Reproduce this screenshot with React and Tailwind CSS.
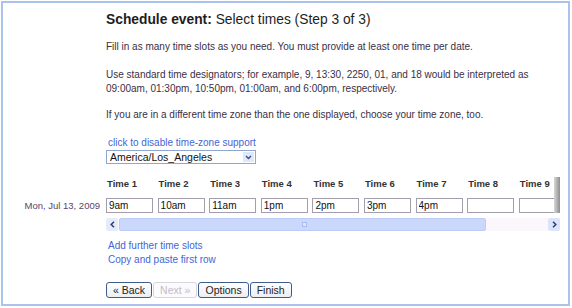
const times = ['9am', '10am', '11am', '1pm', '2pm', '3pm', '4pm', '', ''];

function NavButton({ children, disabled }) {
  return (
    <button
      disabled={disabled}
      className={
        'h-[16px] rounded-[3px] border px-[6px] text-[10.5px] leading-[13px] ' +
        (disabled
          ? 'border-[#d8d4dc] bg-[#fbfafc] px-[5px] text-[#c4bcc8]'
          : 'border-[#3f5c8c] bg-gradient-to-b from-white to-[#eceef4] text-[#222]')
      }
    >
      {children}
    </button>
  );
}

export default function App() {
  return (
    <div className="h-[308px] w-[572px] bg-white font-['Liberation_Sans',Arial,sans-serif] text-[10px] text-[#3a2f45]">
      <div className="ml-[1px] mt-[1px] h-[305px] w-[569px] border-2 border-[#abc3ea] bg-white pt-[8px]">
        <div className="pl-[103px]">
          {/* Heading */}
          <h1 className="text-[13.8px] leading-[18px] text-[#1e1e1e]">
            <span className="font-bold">Schedule event:</span> Select times (Step 3 of 3)
          </h1>

          <p className="mt-[11px] leading-[14px]">
            Fill in as many time slots as you need. You must provide at least one time per date.
          </p>
          <p className="mt-[14px] leading-[14px]">
            Use standard time designators; for example, 9, 13:30, 2250, 01, and 18 would be interpreted as
            <br />
            09:00am, 01:30pm, 10:50pm, 01:00am, and 6:00pm, respectively.
          </p>
          <p className="mt-[12px] leading-[14px]">
            If you are in a different time zone than the one displayed, choose your time zone, too.
          </p>

          <a href="#" className="mt-[14px] block pl-[2px] text-[10px] leading-[14px] text-[#4465d6]">
            click to disable time-zone support
          </a>
          <div className="flex h-[14px] w-[150px] items-center justify-between border border-[#8ea6d0] bg-white pl-[3px] text-[10.5px] leading-[12px] text-[#111]">
            <span>America/Los_Angeles</span>
            <span className="mr-[1px] flex h-[10px] w-[11px] items-center justify-center bg-[#dfe8fa]">
              <svg width="7" height="5" viewBox="0 0 7 5">
                <path d="M1 1 L3.5 3.5 L6 1" fill="none" stroke="#3a4f7d" strokeWidth="1.4" />
              </svg>
            </span>
          </div>
        </div>

        {/* Time slots */}
        <div className="mt-[13px] flex">
          <div className="w-[97px] shrink-0 pt-[22px] text-right text-[9.5px] leading-[14px] text-[#5a4466]">
            Mon, Jul 13, 2009
          </div>
          <div className="ml-[6px] w-[454px]">
            <div className="relative w-[454px] overflow-hidden">
              <div className="flex w-max gap-[4.6px]">
                {times.map((t, i) => (
                  <div key={i} className="w-[47px] shrink-0">
                    <div className="pl-[1px] text-[9.5px] font-bold leading-[14px] text-[#333]">Time {i + 1}</div>
                    <input
                      defaultValue={t}
                      className="mt-[7px] block h-[15px] w-[47px] border border-[#a39eab] px-[2px] text-[10px] leading-[13px] text-[#111] outline-none"
                    />
                  </div>
                ))}
              </div>
              <div className="absolute right-0 top-0 h-full w-[6px] bg-gradient-to-r from-[#d8d8d8] to-[#8f8f8f]" />
            </div>

            {/* Horizontal scrollbar */}
            <div className="mt-[5px] flex h-[13px] w-[454px] items-stretch">
              <div className="flex w-[12px] items-center justify-center rounded-[2px] bg-[#e4ebfa]">
                <svg width="5" height="7" viewBox="0 0 5 7">
                  <path d="M4 0.8 L1.2 3.5 L4 6.2" fill="none" stroke="#2b3f6e" strokeWidth="1.5" />
                </svg>
              </div>
              <div className="flex flex-1 items-stretch bg-[#fbf7fa]">
                <div className="relative ml-[1px] w-[367px] rounded-[2px] border border-[#bccdf5] bg-[#cbd8fb]">
                  <div className="absolute left-[182px] top-[3px] h-[5px] w-[5px] border border-[#a8bcef] bg-[#dbe5fd]" />
                </div>
              </div>
              <div className="flex w-[12px] items-center justify-center rounded-[2px] bg-[#dbe4fa]">
                <svg width="5" height="7" viewBox="0 0 5 7">
                  <path d="M1 0.8 L3.8 3.5 L1 6.2" fill="none" stroke="#2b3f6e" strokeWidth="1.5" />
                </svg>
              </div>
            </div>

            <div className="mt-[8px] pl-[2px] text-[10px] leading-[14px] text-[#4465d6]">
              <a href="#" className="block">Add further time slots</a>
              <a href="#" className="block">Copy and paste first row</a>
            </div>

            <div className="mt-[15px] flex gap-[1px]">
              <NavButton>« Back</NavButton>
              <NavButton disabled>Next »</NavButton>
              <NavButton>Options</NavButton>
              <NavButton>Finish</NavButton>
            </div>
          </div>
        </div>
      </div>
    </div>
  );
}
